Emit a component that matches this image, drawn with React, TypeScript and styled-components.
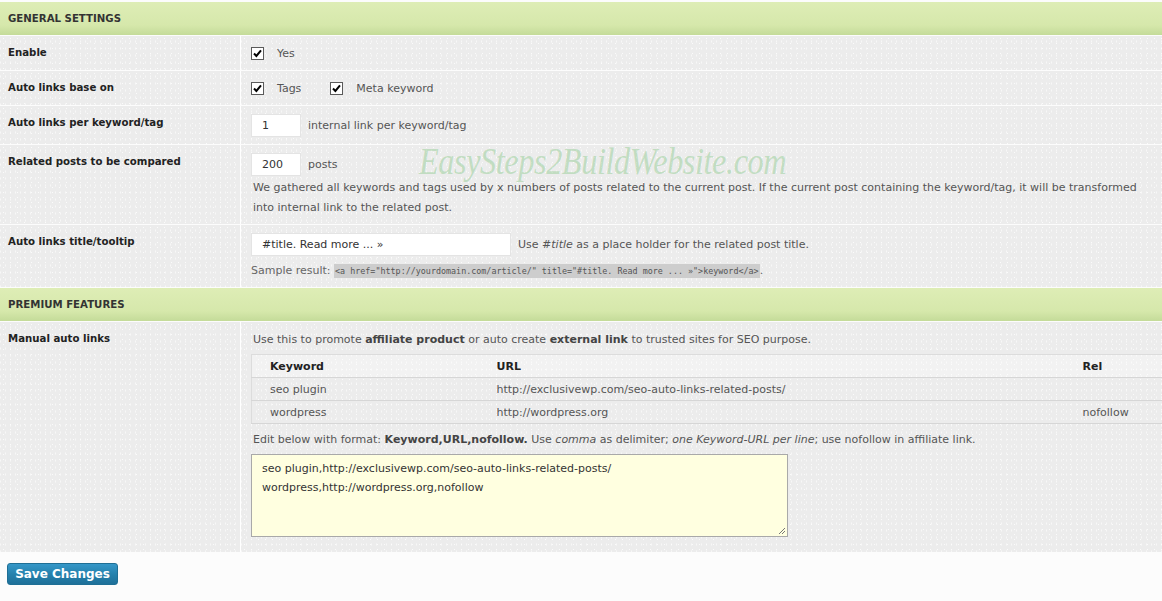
import styled, { createGlobalStyle } from 'styled-components';

const GlobalStyle = createGlobalStyle`
  body {
    margin: 0;
    background: #fcfcfc;
    font-family: "DejaVu Sans", Verdana, sans-serif;
    font-size: 11px;
    color: #555;
  }
`;

const dots = `
  background-image:
    radial-gradient(rgba(255, 255, 255, 0.8) 0.6px, transparent 0.9px),
    radial-gradient(rgba(255, 255, 255, 0.6) 0.6px, transparent 0.9px);
  background-size: 7px 5px, 5px 7px;
  background-position: 0 0, 3px 2px;
`;

const Page = styled.div`
  padding-top: 2px;
  width: 1162px;
`;

const SectionHeader = styled.div`
  height: 33px;
  display: flex;
  align-items: center;
  padding: 0 8px;
  margin-bottom: 1px;
  font-weight: bold;
  font-size: 10.2px;
  color: #333;
  background-color: #d3e6a8;
  background-image: linear-gradient(#deedb6, #d6e8ab 70%, #c4db99);
`;

const Row = styled.div`
  display: grid;
  grid-template-columns: 241px 1fr;
  margin-bottom: 1px;
`;

const Label = styled.div`
  padding: 10px 8px;
  line-height: 14px;
  font-weight: bold;
  font-size: 10.2px;
  color: #222;
  background-color: #ececec;
  border-right: 1px solid #fff;
  ${dots}
`;

const Field = styled.div<{ $right?: number; $bottom?: number }>`
  position: relative;
  padding: 8px ${(p) => p.$right ?? 10}px ${(p) => p.$bottom ?? 8}px 10px;
  background-color: #ececec;
  ${dots}
`;

const Line = styled.div`
  display: flex;
  align-items: center;
  min-height: 18px;
  gap: 7px;
`;

const Check = styled.span`
  display: inline-flex;
  align-items: center;
  justify-content: center;
  width: 11px;
  height: 11px;
  border: 1px solid #5a5a5a;
  background: #fff;
  margin-right: 13px;
`;

const Option = styled.label`
  display: inline-flex;
  align-items: center;
  margin-right: 22px;
  color: #555;
`;

const TextInput = styled.div<{ $width: number }>`
  width: ${(p) => p.$width}px;
  height: 23px;
  box-sizing: border-box;
  padding: 0 10px;
  display: flex;
  align-items: center;
  background: #fff;
  border: 1px solid #e4e4e4;
  color: #333;
`;

const Note = styled.p`
  margin: 2px 0 0 2px;
  line-height: 20px;
  color: #555;
`;

const Watermark = styled.div`
  position: absolute;
  left: 178px;
  top: -6px;
  font-family: "Liberation Serif", serif;
  font-style: italic;
  font-size: 38px;
  letter-spacing: -0.5px;
  transform: scaleX(0.85);
  transform-origin: left top;
  color: rgba(150, 205, 150, 0.5);
  pointer-events: none;
  white-space: nowrap;
`;

const Sample = styled.div`
  margin-top: 5px;
  line-height: 19px;
  color: #666;
`;

const Code = styled.code`
  font-family: "DejaVu Sans Mono", "Liberation Mono", monospace;
  font-size: 8.4px;
  background: #cdcdcd;
  color: #555;
  padding: 2px 1px;
`;

const Intro = styled.p`
  margin: 0 0 0 2px;
  line-height: 20px;
  color: #555;
  b {
    color: #444;
  }
`;

const LinkTable = styled.table`
  width: 100%;
  margin-top: 4px;
  border-collapse: collapse;
  border: 1px solid #dcdcdc;
  border-right: none;

  th,
  td {
    height: 22px;
    padding: 0 0 0 18px;
    text-align: left;
    border-bottom: 1px solid #d6d6d6;
  }

  th {
    color: #222;
    background: rgba(255, 255, 255, 0.35);
  }

  td {
    color: #555;
  }
`;

const Format = styled.p`
  margin: 6px 0 4px 2px;
  height: 20px;
  line-height: 20px;
  color: #555;
  b {
    color: #444;
  }
`;

const Area = styled.div`
  width: 537px;
  height: 83px;
  box-sizing: border-box;
  padding: 4px 10px;
  background: #ffffe0;
  border: 1px solid #a9a9a9;
  color: #333;
  line-height: 19px;
  position: relative;
`;

const Grip = styled.svg`
  position: absolute;
  right: 1px;
  bottom: 1px;
`;

const Footer = styled.div`
  padding: 10px 7px;
  background: #fcfcfc;
`;

const SaveButton = styled.button`
  width: 111px;
  height: 22px;
  padding: 0;
  border: 1px solid #1f6f95;
  border-radius: 3px;
  background: linear-gradient(#3597c8, #2480ab 55%, #1f7099);
  color: #fff;
  font-family: "DejaVu Sans", Verdana, sans-serif;
  font-weight: bold;
  font-size: 12px;
`;

function Tick() {
  return (
    <svg width="9" height="9" viewBox="0 0 9 9">
      <path d="M1 4.5 L3.4 7 L8 1.4" fill="none" stroke="#000" strokeWidth="2" />
    </svg>
  );
}

function CheckOption({ label }: { label: string }) {
  return (
    <Option>
      <Check>
        <Tick />
      </Check>
      {label}
    </Option>
  );
}

const links = [
  { keyword: 'seo plugin', url: 'http://exclusivewp.com/seo-auto-links-related-posts/', rel: '' },
  { keyword: 'wordpress', url: 'http://wordpress.org', rel: 'nofollow' },
];

export default function App() {
  return (
    <>
      <GlobalStyle />
      <Page>
        <SectionHeader>GENERAL SETTINGS</SectionHeader>
        <Row>
          <Label>Enable</Label>
          <Field>
            <Line>
              <CheckOption label="Yes" />
            </Line>
          </Field>
        </Row>
        <Row>
          <Label>Auto links base on</Label>
          <Field>
            <Line>
              <CheckOption label="Tags" />
              <CheckOption label="Meta keyword" />
            </Line>
          </Field>
        </Row>
        <Row>
          <Label>Auto links per keyword/tag</Label>
          <Field $bottom={7}>
            <Line>
              <TextInput $width={50}>1</TextInput>
              internal link per keyword/tag
            </Line>
          </Field>
        </Row>
        <Row>
          <Label>Related posts to be compared</Label>
          <Field $bottom={6}>
            <Watermark>EasySteps2BuildWebsite.com</Watermark>
            <Line>
              <TextInput $width={50}>200</TextInput>
              posts
            </Line>
            <Note>
              We gathered all keywords and tags used by x numbers of posts related to the current post. If the
              current post containing the keyword/tag, it will be transformed into internal link to the related
              post.
            </Note>
          </Field>
        </Row>
        <Row>
          <Label>Auto links title/tooltip</Label>
          <Field $bottom={6}>
            <Line>
              <TextInput $width={260}>#title. Read more ... »</TextInput>
              <span>
                Use <i>#title</i> as a place holder for the related post title.
              </span>
            </Line>
            <Sample>
              Sample result:{' '}
              <Code>&lt;a href="http://yourdomain.com/article/" title="#title. Read more ... »"&gt;keyword&lt;/a&gt;</Code>.
            </Sample>
          </Field>
        </Row>
        <SectionHeader>PREMIUM FEATURES</SectionHeader>
        <Row>
          <Label>Manual auto links</Label>
          <Field $right={0} $bottom={15}>
            <Intro>
              Use this to promote <b>affiliate product</b> or auto create <b>external link</b> to trusted sites for SEO
              purpose.
            </Intro>
            <LinkTable>
              <colgroup>
                <col style={{ width: 227 }} />
                <col style={{ width: 586 }} />
                <col />
              </colgroup>
              <thead>
                <tr>
                  <th>Keyword</th>
                  <th>URL</th>
                  <th>Rel</th>
                </tr>
              </thead>
              <tbody>
                {links.map((l) => (
                  <tr key={l.keyword}>
                    <td>{l.keyword}</td>
                    <td>{l.url}</td>
                    <td>{l.rel}</td>
                  </tr>
                ))}
              </tbody>
            </LinkTable>
            <Format>
              Edit below with format: <b>Keyword,URL,nofollow.</b> Use <i>comma</i> as delimiter;{' '}
              <i>one Keyword-URL per line</i>; use nofollow in affiliate link.
            </Format>
            <Area>
              seo plugin,http://exclusivewp.com/seo-auto-links-related-posts/
              <br />
              wordpress,http://wordpress.org,nofollow
              <Grip width="8" height="8" viewBox="0 0 8 8">
                <path d="M7 1 L1 7 M7 4 L4 7" stroke="#777" strokeWidth="1" />
              </Grip>
            </Area>
          </Field>
        </Row>
        <Footer>
          <SaveButton>Save Changes</SaveButton>
        </Footer>
      </Page>
    </>
  );
}
